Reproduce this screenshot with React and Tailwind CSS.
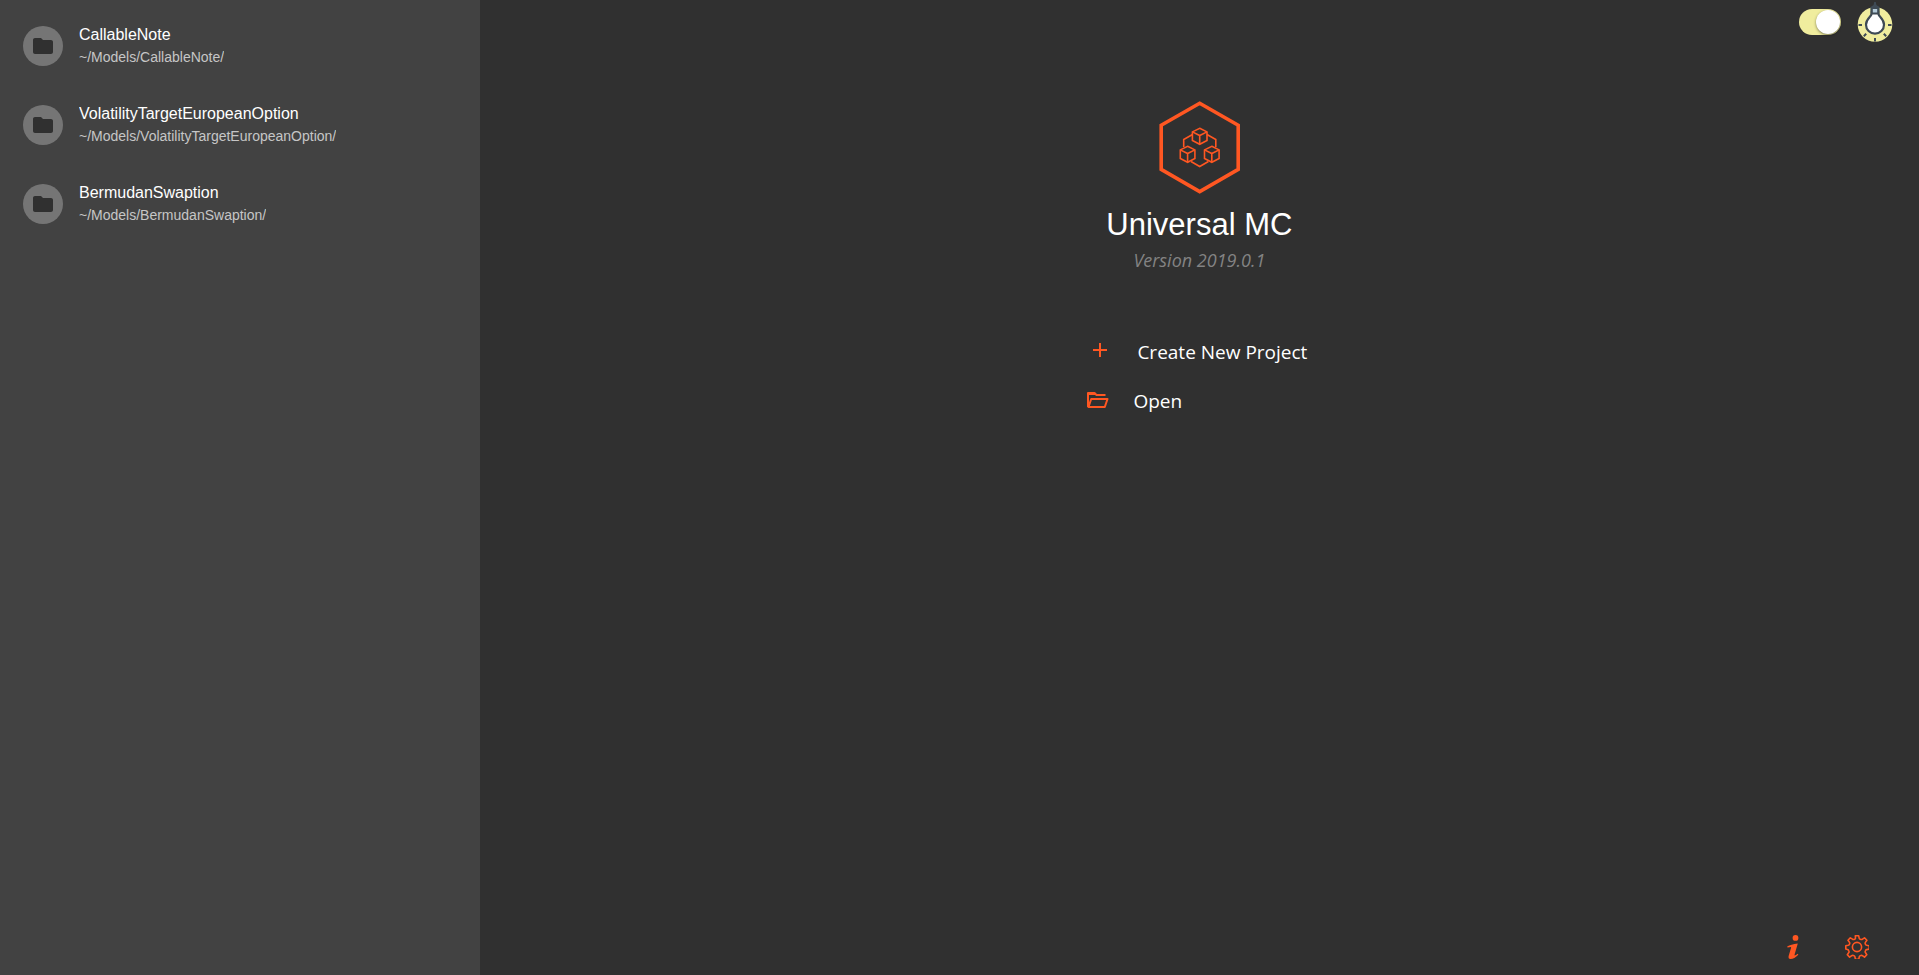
import { useState } from "react";

const projects = [
  { name: "CallableNote", path: "~/Models/CallableNote/" },
  { name: "VolatilityTargetEuropeanOption", path: "~/Models/VolatilityTargetEuropeanOption/" },
  { name: "BermudanSwaption", path: "~/Models/BermudanSwaption/" },
];

function FolderGlyph() {
  return (
    <svg className="size-6" viewBox="0 0 24 24" fill="#303030" aria-hidden="true">
      <path d="M10 4H4c-1.100 0-1.990.9-1.990 2L2 18c0 1.100.9 2 2 2h16c1.100 0 2-.9 2-2V8c0-1.100-.9-2-2-2h-8l-2-2z" />
    </svg>
  );
}

function Cube({ x, y }) {
  return (
    <g transform={`translate(${x} ${y})`}>
      <path d="M0 -8 7.300 -4.400V4.200L0 8 -7.300 4.200V-4.400Z" />
      <path d="M-7.300 -4.400 0 -0.800 7.300 -4.400M0 -0.800V8" />
    </g>
  );
}

function Logo() {
  return (
    <svg className="h-[100px] w-[91px]" viewBox="0 0 91 100" fill="none" stroke="#ff5722" aria-hidden="true">
      <path strokeWidth="3.600" d="M45.700 6.200 84.200 28.200V72.400L45.700 94.600 7.200 72.400V28.200Z" />
      <g strokeWidth="1.600">
        <path d="M38.500 37.500 29.700 42.500V50M53 37.500 61.800 42.500V50M37 64.500 45.700 69.500 54.400 64.500" />
        <Cube x={45.700} y={39.300} />
        <Cube x={33.600} y={57.300} />
        <Cube x={57.800} y={57.300} />
      </g>
    </svg>
  );
}

function BulbDial() {
  return (
    <svg className="h-[42px] w-9" viewBox="0 0 36 42" fill="none" aria-hidden="true">
      <circle cx="18" cy="24.500" r="17.300" fill="#f0ed9e" />
      <path stroke="#3e4a55" strokeWidth="2" d="M1.500 25H5M31 25h3.500M18 38V41.500M6.800 36.200l2.400-2.400M29.200 36.200l-2.400-2.400" />
      <path fill="#3e4a55" d="M17.200 2h1.600l.6 3 3.100 2v4h-9V7l3.100-2z" />
      <path fill="#fff" stroke="#3e4a55" strokeWidth="2.200" d="M14.500 12v2c0 2.500-5.500 4.500-5.500 10.700a9 9 0 0 0 18 0c0-6.200-5.500-8.200-5.500-10.700v-2z" />
      <path fill="#b3cad8" stroke="#3e4a55" strokeWidth="2" d="M14.800 8h6.400V13.500h-6.400z" />
    </svg>
  );
}

function PlusIcon() {
  return (
    <svg className="h-[22px] w-[22px]" viewBox="0 0 22 22" stroke="#ff5722" strokeWidth="2" aria-hidden="true">
      <path d="M9 2V16M2 9H16" />
    </svg>
  );
}

function OpenFolderIcon() {
  return (
    <svg className="h-[22px] w-[22px]" viewBox="0 0 22 22" fill="none" stroke="#ff5722" strokeWidth="2" strokeLinejoin="round" aria-hidden="true">
      <path d="M1 17V3H7.500L9.500 5H18.500" />
      <path d="M1 4H8" />
      <path d="M1.500 17 4.200 9H20.500L17.800 17Z" />
    </svg>
  );
}

function InfoIcon() {
  return (
    <svg className="size-6" viewBox="0 0 24 24" fill="#ff5722" aria-hidden="true">
      <circle cx="14.500" cy="2.900" r="2.900" />
      <path d="M6.200 11.500C8.600 10.300 12 9 16.800 8.500L13.600 19.500C13.300 20.800 13.800 21 16.800 18.800L17.300 19.700C14.700 22.500 12 24 9.600 24 7.700 24 7.200 22.700 7.700 20.700L10.100 12.700C10.400 11.600 9.300 11.700 6.500 12.600Z" />
    </svg>
  );
}

function GearIcon() {
  return (
    <svg className="size-6" viewBox="0 0 24 24" fill="none" stroke="#ff5722" strokeWidth="1.600" strokeLinejoin="round" aria-hidden="true">
      <circle cx="12" cy="12" r="4.600" />
      <path d="M10.300.8h3.400l.5 2.500q0 .8 1.600 1.100 1 .4 1.700-.2l2-1.400 2.400 2.400-1.500 2.200q-.5.700 0 1.700.4 1 1.200 1.200l2.600.5v3.300l-2.600.5q-.8.200-1.200 1.200-.5 1 0 1.700l1.400 2.200-2.300 2.400-2.100-1.500q-.7-.5-1.700-.1-1.200.4-1.400 1.200l-.5 2.500h-3.400l-.5-2.500q-.2-.8-1.400-1.200-1-.4-1.700.1l-2.200 1.500-2.300-2.400 1.500-2.200q.5-.7 0-1.700-.4-1-1.200-1.200L.8 14.100v-3.300l2.500-.5q.8-.2 1.200-1.200.5-1 0-1.700L3 5.200l2.300-2.400 2.200 1.400q.7.600 1.700.2 1.200-.3 1.300-1.100z" />
    </svg>
  );
}

export default function App() {
  const [dark, setDark] = useState(true);

  return (
    <div className="flex min-h-screen bg-[#303030] font-['Liberation_Sans',Arial,sans-serif] text-white">
      <aside className="w-1/4 shrink-0 bg-[#424242] pt-1.5">
        <ul>
          {projects.map((project) => (
            <li key={project.name}>
              <a href="#" className="flex h-[79px] items-center gap-4 px-[23px]">
                <span className="flex size-10 shrink-0 items-center justify-center rounded-full bg-[#757575]">
                  <FolderGlyph />
                </span>
                <span className="flex min-w-0 flex-col pb-0.5">
                  <span className="truncate text-base leading-6">{project.name}</span>
                  <span className="truncate text-sm leading-5 text-[#c6c6c6]">{project.path}</span>
                </span>
              </a>
            </li>
          ))}
        </ul>
      </aside>

      <main className="flex grow flex-col">
        <header className="flex h-[45px] items-start justify-end gap-4 pr-[26px]">
          <label className="mt-[9px] flex h-[26px] w-[42px] cursor-pointer items-center rounded-full bg-[#f0ed9e] p-px has-checked:justify-end">
            <input
              type="checkbox"
              role="switch"
              aria-label="Dark theme"
              checked={dark}
              onChange={() => setDark(!dark)}
              className="sr-only"
            />
            <span className="size-6 rounded-full bg-white shadow-sm shadow-black/40" />
          </label>
          <BulbDial />
        </header>

        <section className="flex flex-col items-center pt-[52px]">
          <Logo />
          <h1 className="mt-2 text-[31px] leading-10">Universal MC</h1>
          <p className="mt-[3px] font-['Open_Sans','Noto_Sans',sans-serif] text-lg leading-6 text-[#838383] italic">
            Version 2019.0.1
          </p>
          <div className="mt-[65px] flex flex-col gap-[19px] font-['Open_Sans','Noto_Sans',sans-serif] text-[19px] leading-[30px]">
            <button type="button" className="flex cursor-pointer items-center gap-6 px-1">
              <PlusIcon />
              Create New Project
            </button>
            <button type="button" className="flex cursor-pointer items-center gap-6">
              <OpenFolderIcon />
              Open
            </button>
          </div>
        </section>

        <footer className="mt-auto flex justify-end gap-10 pr-[50px] pb-4">
          <button type="button" aria-label="About" className="cursor-pointer">
            <InfoIcon />
          </button>
          <button type="button" aria-label="Settings" className="cursor-pointer">
            <GearIcon />
          </button>
        </footer>
      </main>
    </div>
  );
}
